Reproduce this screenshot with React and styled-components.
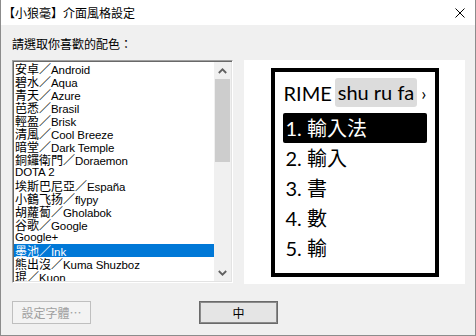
import React from "react";
import styled, { createGlobalStyle } from "styled-components";

const schemes = [
  ["安卓／", "Android"],
  ["碧水／", "Aqua"],
  ["青天／", "Azure"],
  ["芭悉／", "Brasil"],
  ["輕盈／", "Brisk"],
  ["清風／", "Cool Breeze"],
  ["暗堂／", "Dark Temple"],
  ["銅鑼衛門／", "Doraemon"],
  ["", "DOTA 2"],
  ["埃斯巴尼亞／", "España"],
  ["小鶴飞扬／", "flypy"],
  ["胡蘿蔔／", "Gholabok"],
  ["谷歌／", "Google"],
  ["", "Google+"],
  ["墨池／", "Ink"],
  ["熊出沒／", "Kuma Shuzboz"],
  ["琨／", "Kuon"],
];

const candidates = ["輸入法", "輸入", "書", "數", "輸"];

const App = () => {
  return (
    <>
      <GlobalStyle />
      <Window>
        <TitleBar>
          <span>【小狼毫】介面風格設定</span>
          <svg width="10" height="10" viewBox="0 0 10 10">
            <path d="M0.5 0.5 L9.5 9.5 M9.5 0.5 L0.5 9.5" stroke="#000" strokeWidth="1" />
          </svg>
        </TitleBar>
        <Body>
          <Label>請選取你喜歡的配色：</Label>
          <Main>
            <ListBox>
              <Items>
                {schemes.map(([zh, en]) => (
                  <Item key={en} $selected={en === "Ink"}>
                    {zh && <Cjk>{zh}</Cjk>}
                    <Latin>{en}</Latin>
                  </Item>
                ))}
              </Items>
              <ScrollBar>
                <Arrow>
                  <svg width="9" height="6" viewBox="0 0 9 6">
                    <path d="M0.8 5 L4.5 1.3 L8.2 5" fill="none" stroke="#606060" strokeWidth="1.8" />
                  </svg>
                </Arrow>
                <Thumb />
                <Track />
                <Arrow>
                  <svg width="9" height="6" viewBox="0 0 9 6">
                    <path d="M0.8 1 L4.5 4.7 L8.2 1" fill="none" stroke="#606060" strokeWidth="1.8" />
                  </svg>
                </Arrow>
              </ScrollBar>
            </ListBox>
            <Panel>
              <PreviewBox>
                <Preedit>
                  <span>RIME</span>
                  <Composition>shu ru fa</Composition>
                  <Caret>›</Caret>
                </Preedit>
                <Candidates>
                  {candidates.map((c, i) => (
                    <Candidate key={c} $active={i === 0}>
                      {i + 1}. <Cjk>{c}</Cjk>
                    </Candidate>
                  ))}
                </Candidates>
              </PreviewBox>
            </Panel>
          </Main>
          <Buttons>
            <Button disabled>設定字體…</Button>
            <Button $default>中</Button>
            <span />
          </Buttons>
        </Body>
      </Window>
    </>
  );
};

const GlobalStyle = createGlobalStyle`
  html, body {
    margin: 0;
    padding: 0;
    background: #fff;
  }
  body {
    font-family: "Liberation Sans", "Noto Sans CJK TC", sans-serif;
  }
`;

const Window = styled.div`
  width: 476px;
  height: 336px;
  box-sizing: border-box;
  border: 1px solid #8c8c8c;
  border-top: none;
  background: #f0f0f0;
  display: flex;
  flex-direction: column;
`;

const TitleBar = styled.div`
  height: 25px;
  flex-shrink: 0;
  background: #fff;
  display: flex;
  align-items: center;
  justify-content: space-between;
  padding: 0 10px 0 2px;
  font-family: "Noto Sans CJK TC", sans-serif;
  font-size: 12px;
  color: #000;
`;

const Body = styled.div`
  padding: 0 10px 0 11px;
`;

const Label = styled.div`
  margin-top: 11px;
  height: 16px;
  line-height: 16px;
  font-family: "Noto Sans CJK TC", sans-serif;
  font-size: 12px;
  color: #000;
`;

const Main = styled.div`
  margin-top: 8px;
  display: flex;
  gap: 11px;
  height: 224px;
`;

const ListBox = styled.div`
  width: 221px;
  height: 223px;
  box-sizing: border-box;
  border: 1px solid;
  border-color: #a0a0a0 #fff #fff #a0a0a0;
  box-shadow: inset 1px 1px 0 #696969, inset -1px -1px 0 #e3e3e3;
  padding: 1px;
  background: #fff;
  display: flex;
`;

const Items = styled.div`
  flex: 1;
  overflow: hidden;
`;

const Item = styled.div`
  height: 13px;
  line-height: 13px;
  padding-left: 1px;
  white-space: nowrap;
  font-size: 12px;
  color: ${(p) => (p.$selected ? "#fff" : "#000")};
  background: ${(p) => (p.$selected ? "#0078d7" : "transparent")};
`;

const Cjk = styled.span`
  font-family: "Noto Sans CJK TC", sans-serif;
`;

const Latin = styled.span`
  font-family: "Liberation Sans", sans-serif;
  font-size: 11.5px;
  letter-spacing: -0.1px;
`;

const ScrollBar = styled.div`
  width: 17px;
  background: #f0f0f0;
  display: flex;
  flex-direction: column;
`;

const Arrow = styled.div`
  height: 17px;
  display: flex;
  align-items: center;
  justify-content: center;
`;

const Thumb = styled.div`
  height: 83px;
  margin: 0 1px;
  background: #cdcdcd;
`;

const Track = styled.div`
  flex: 1;
`;

const Panel = styled.div`
  width: 221px;
  height: 224px;
  background: #fff;
  display: flex;
  justify-content: center;
  padding-top: 8px;
  box-sizing: border-box;
`;

const PreviewBox = styled.div`
  width: 168px;
  height: 209px;
  box-sizing: border-box;
  border: 4px solid #000;
  padding: 6px 0 0 8px;
  font-family: "Lato", "Noto Sans CJK TC", sans-serif;
  font-size: 20px;
  color: #000;
`;

const Preedit = styled.div`
  height: 29px;
  display: flex;
  align-items: center;
  padding-left: 1px;
`;

const Composition = styled.span`
  margin-left: 3px;
  height: 29px;
  line-height: 29px;
  padding: 0 3px;
  background: #dcdcdc;
  border-radius: 3px;
`;

const Caret = styled.span`
  margin-left: 4px;
  font-size: 18px;
`;

const Candidates = styled.div`
  margin-top: 6px;
`;

const Candidate = styled.div`
  width: 144px;
  height: 30px;
  line-height: 30px;
  padding-left: 3px;
  box-sizing: border-box;
  white-space: pre;
  border-radius: 2px;
  color: ${(p) => (p.$active ? "#fff" : "#000")};
  background: ${(p) => (p.$active ? "#000" : "transparent")};
`;

const Buttons = styled.div`
  margin-top: 17px;
  display: grid;
  grid-template-columns: 1fr auto 1fr;
  align-items: center;
`;

const Button = styled.button`
  justify-self: start;
  width: 79px;
  height: 23px;
  padding: 0;
  box-sizing: border-box;
  font-family: "Noto Sans CJK TC", sans-serif;
  font-size: 12px;
  color: ${(p) => (p.disabled ? "#a0a0a0" : "#000")};
  background: ${(p) => (p.disabled ? "#f3f3f3" : "#e5e5e5")};
  border: 1px solid ${(p) => (p.$default ? "#6a6a6a" : "#bfbfbf")};
  box-shadow: ${(p) => (p.$default ? "inset 0 0 0 1px #8a8a8a" : "none")};
  border-radius: 0;
`;

export default App;
